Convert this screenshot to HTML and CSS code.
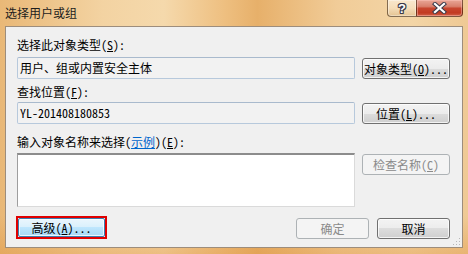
FILE: index.html
```html
<!DOCTYPE html>
<html lang="zh-CN">
<head>
<meta charset="utf-8">
<title>选择用户或组</title>
<link rel="stylesheet" href="styles.css">
</head>
<body>
<div class="window">
  <div class="titlebar">
    <span class="title">选择用户或组</span>
    <div class="caption-buttons">
      <div class="cap help"><span class="qmark">?</span></div>
      <div class="cap close">
        <svg width="15" height="12" viewBox="0 0 15 12">
          <path d="M3 2 L12 10 M12 2 L3 10" stroke="#3b3b4a" stroke-width="4.2" stroke-linecap="square" fill="none"/>
          <path d="M3 2 L12 10 M12 2 L3 10" stroke="#ffffff" stroke-width="2.2" stroke-linecap="square" fill="none"/>
        </svg>
      </div>
    </div>
  </div>
  <div class="client">
    <div class="label label-first">选择此对象类型(<u>S</u>):</div>
    <div class="row row-first">
      <div class="field">用户、组或内置安全主体</div>
      <button class="btn side">对象类型(<u>O</u>)...</button>
    </div>
    <div class="label label-second">查找位置(<u>F</u>):</div>
    <div class="row row-second">
      <div class="field">YL-201408180853</div>
      <button class="btn side">位置(<u>L</u>)...</button>
    </div>
    <div class="label label-third">输入对象名称来选择(<a class="link" href="#">示例</a>)(<u>E</u>):</div>
    <div class="row row-third">
      <div class="names"></div>
      <button class="btn side disabled">检查名称(<u>C</u>)</button>
    </div>
    <div class="bottom">
      <div class="focus-ring"><button class="btn hot">高级(<u>A</u>)...</button></div>
      <button class="btn small disabled ok">确定</button>
      <button class="btn small">取消</button>
    </div>
    <svg class="grip" width="8" height="8" viewBox="0 0 8 8">
      <rect x="6" y="0" width="1" height="1" fill="#b8b8b8"/>
      <rect x="3" y="3" width="1" height="1" fill="#b8b8b8"/>
      <rect x="6" y="3" width="1" height="1" fill="#b8b8b8"/>
      <rect x="0" y="6" width="1" height="1" fill="#b8b8b8"/>
      <rect x="3" y="6" width="1" height="1" fill="#b8b8b8"/>
      <rect x="6" y="6" width="1" height="1" fill="#b8b8b8"/>
    </svg>
  </div>
</div>
</body>
</html>
```

FILE: styles.css
```css
html, body {
  margin: 0;
  padding: 0;
}
body {
  width: 468px;
  height: 254px;
  overflow: hidden;
  font-family: "Noto Sans Mono CJK SC", "Noto Sans CJK SC", sans-serif;
  font-size: 12px;
  color: #000;
}
.window {
  width: 468px;
  height: 254px;
  box-sizing: border-box;
  padding: 0 5px 6px 5px;
  display: flex;
  flex-direction: column;
  background:
    linear-gradient(180deg, rgba(255,255,255,0) 85%, rgba(220,140,50,0.35) 100%),
    linear-gradient(90deg, #e9b877 0%, #f3d3a2 22%, #f5d9ac 35%, #eebf80 48%, #e7b06a 55%, #f1cc98 72%, #f3d5a6 88%, #efc994 100%);
}
.titlebar {
  height: 26px;
  display: flex;
  align-items: flex-start;
  justify-content: space-between;
}
.title {
  line-height: 26px;
  font-family: "Noto Sans CJK SC", sans-serif;
  font-size: 12px;
  color: #1c1c1c;
}
.caption-buttons {
  display: flex;
}
.cap {
  height: 17px;
  box-sizing: border-box;
  border: 1px solid rgba(70, 45, 20, 0.65);
  border-top: none;
  display: flex;
  align-items: center;
  justify-content: center;
}
.help {
  width: 29px;
  border-right: none;
  border-radius: 0 0 0 4px;
  background: linear-gradient(180deg, rgba(255,255,255,0.45) 0%, rgba(255,255,255,0.25) 50%, rgba(150,110,60,0.15) 100%);
  box-shadow: inset 0 0 0 1px rgba(255,255,255,0.35);
}
.qmark {
  font-family: "Liberation Sans", sans-serif;
  font-weight: bold;
  font-size: 13px;
  line-height: 13px;
  color: #fff;
  text-shadow: 1px 0 0 #3b3b4a, -1px 0 0 #3b3b4a, 0 1px 0 #3b3b4a, 0 -1px 0 #3b3b4a,
               1px 1px 0 #3b3b4a, -1px -1px 0 #3b3b4a, 1px -1px 0 #3b3b4a, -1px 1px 0 #3b3b4a;
}
.close {
  width: 47px;
  border-radius: 0 0 4px 0;
  background: linear-gradient(180deg, #e9a696 0%, #d9806d 40%, #c8462f 52%, #c23a22 80%, #d0634a 100%);
  box-shadow: inset 0 0 0 1px rgba(255,200,190,0.45);
}
.close svg {
  display: block;
}
.client {
  flex: 1;
  position: relative;
  border: 1px solid rgba(90, 60, 30, 0.55);
  background: #f0f0f0;
  padding: 0 12px 0 11px;
}
.label {
  height: 16px;
  line-height: 16px;
  white-space: nowrap;
}
.label-first { margin-top: 10px; }
.label-second { margin-top: 5px; }
.label-third { margin-top: 10px; }
.link {
  color: #0066cc;
  text-decoration: underline;
}
.row {
  display: flex;
  align-items: flex-start;
  gap: 7px;
}
.row-first { margin-top: 4px; }
.row-second { margin-top: 2px; }
.row-third { margin-top: 3px; }
.field {
  width: 338px;
  height: 22px;
  box-sizing: border-box;
  border: 1px solid #b7c9dc;
  border-top-color: #a9bacd;
  border-radius: 2px;
  background: #f2f2f2;
  padding-left: 2px;
  line-height: 19px;
  white-space: nowrap;
}
.names {
  width: 338px;
  height: 54px;
  box-sizing: border-box;
  border: 1px solid #dadada;
  border-top: 2px solid #8c8c8c;
  border-left-color: #9e9e9e;
  background: #fff;
}
.btn {
  box-sizing: border-box;
  height: 21px;
  padding: 0;
  font-family: inherit;
  font-size: 12px;
  line-height: 17px;
  color: #000;
  border: 1px solid #707070;
  border-radius: 3px;
  background: linear-gradient(180deg, #f3f3f3 0%, #ececec 50%, #dddddd 50%, #cfcfcf 100%);
  box-shadow: inset 0 0 0 1px rgba(255,255,255,0.75);
  white-space: nowrap;
}
.btn u {
  text-decoration: underline;
}
.side {
  width: 88px;
  margin-top: 1px;
}
.disabled {
  color: #8a8a8a;
  border-color: #adb2b5;
  background: #f4f4f4;
  box-shadow: none;
}
.bottom {
  display: flex;
  align-items: flex-start;
  margin-top: 11px;
}
.focus-ring {
  border: 2px solid #e00000;
  margin-left: -1px;
  margin-top: -2px;
  display: flex;
}
.hot {
  width: 87px;
  height: 19px;
  line-height: 15px;
  border-color: #3c7fb1;
  border-radius: 2px;
  background: linear-gradient(180deg, #eaf6fd 0%, #d9f0fc 50%, #bee6fd 50%, #a7d9f5 100%);
}
.small {
  width: 73px;
}
.ok {
  margin-left: auto;
  margin-right: 8px;
}
.grip {
  position: absolute;
  right: 1px;
  bottom: 1px;
}
```
